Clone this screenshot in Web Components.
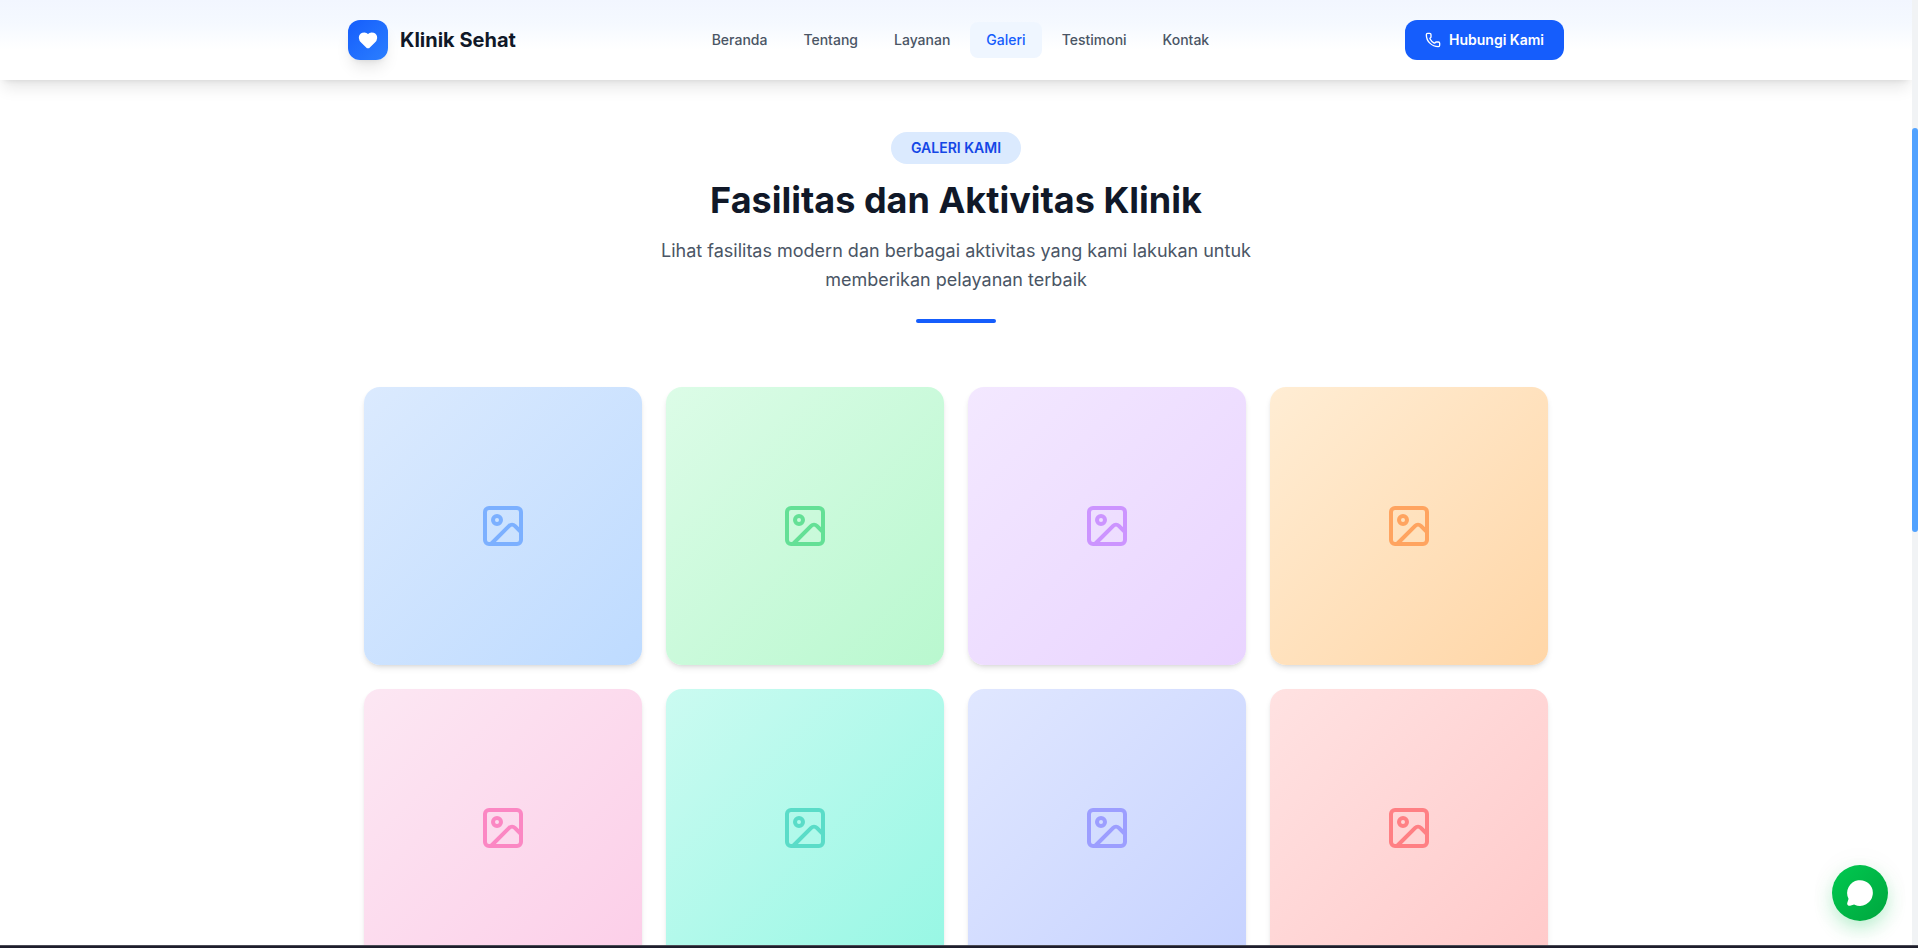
<!DOCTYPE html>
<html lang="id">
<head>
<meta charset="utf-8">
<meta name="viewport" content="width=device-width, initial-scale=1">
<title>Klinik Sehat</title>
<style>
  body {
    margin: 0;
    font-family: Inter, 'Liberation Sans', sans-serif;
    font-size: 14px;
    line-height: 20px;
    color: #101828;
  }
</style>
</head>
<body>
<klinik-app>
  <site-header slot="header">
    <nav-link href="#beranda">Beranda</nav-link>
    <nav-link href="#tentang">Tentang</nav-link>
    <nav-link href="#layanan">Layanan</nav-link>
    <nav-link href="#galeri" active>Galeri</nav-link>
    <nav-link href="#testimoni">Testimoni</nav-link>
    <nav-link href="#kontak">Kontak</nav-link>
  </site-header>
  <gallery-section>
    <span slot="badge">GALERI KAMI</span>
    <span slot="title">Fasilitas dan Aktivitas Klinik</span>
    <span slot="text">Lihat fasilitas modern dan berbagai aktivitas yang kami lakukan untuk memberikan pelayanan terbaik</span>
    <gallery-card color="blue"></gallery-card>
    <gallery-card color="green"></gallery-card>
    <gallery-card color="purple"></gallery-card>
    <gallery-card color="orange"></gallery-card>
    <gallery-card color="pink"></gallery-card>
    <gallery-card color="teal"></gallery-card>
    <gallery-card color="indigo"></gallery-card>
    <gallery-card color="red"></gallery-card>
  </gallery-section>
  <chat-button slot="chat"></chat-button>
</klinik-app>

<script>
const define = (name, html, setup) => {
  const template = document.createElement('template')
  template.innerHTML = html
  customElements.define(name, class extends HTMLElement {
    constructor () {
      super()
      this.attachShadow({ mode: 'open' })
        .appendChild(template.content.cloneNode(true))
    }

    connectedCallback () {
      if (setup) setup(this, this.shadowRoot)
    }
  })
}

define('klinik-app', `
  <style>
    :host {
      display: flex;
      flex-direction: column;
      height: 100vh;
      overflow: hidden;
      background: #fff;
    }
    #view {
      position: relative;
      flex: 1;
      min-height: 0;
      display: flex;
    }
    #page {
      flex: 1;
      min-width: 0;
      overflow: hidden;
    }
    #rail {
      width: 6px;
      background: #f1f3f5;
      display: flex;
      flex-direction: column;
    }
    #rail::before {
      content: '';
      flex: 128;
    }
    #rail::after {
      content: '';
      flex: 413;
    }
    #thumb {
      flex: 404;
      background: #51a2ff;
      border-radius: 3px;
    }
    #edge {
      height: 2px;
      border-top: 1px solid #4b4b55;
      background: #1e1e2c;
    }
    slot[name="chat"] {
      display: block;
      position: absolute;
      right: 30px;
      bottom: 24px;
    }
  </style>
  <div id="view">
    <div id="page">
      <slot name="header"></slot>
      <main><slot></slot></main>
    </div>
    <div id="rail"><div id="thumb"></div></div>
    <slot name="chat"></slot>
  </div>
  <div id="edge"></div>
`)

define('site-header', `
  <style>
    :host {
      display: block;
      position: relative;
      background: linear-gradient(#f2f6ff, #f5f9ff 30%, #fff 62%);
      box-shadow: 0 10px 15px -3px rgba(0, 0, 0, .1), 0 4px 6px -4px rgba(0, 0, 0, .1);
    }
    header {
      display: flex;
      align-items: center;
      justify-content: space-between;
      max-width: 1216px;
      height: 80px;
      margin: 0 auto;
    }
    #brand {
      display: flex;
      align-items: center;
      gap: 12px;
      color: #101828;
      font-size: 20px;
      font-weight: 700;
      line-height: 28px;
      text-decoration: none;
    }
    #logo {
      display: grid;
      place-items: center;
      width: 40px;
      height: 40px;
      border-radius: 12px;
      background: linear-gradient(135deg, #155dfc, #2b7fff);
      box-shadow: 0 10px 15px -3px rgba(0, 0, 0, .1), 0 4px 6px -4px rgba(0, 0, 0, .1);
    }
    nav {
      display: flex;
      gap: 4px;
    }
    button {
      display: flex;
      align-items: center;
      gap: 8px;
      padding: 10px 20px;
      border: none;
      border-radius: 12px;
      background: #155dfc;
      color: #fff;
      font: inherit;
      font-weight: 600;
      cursor: pointer;
    }
  </style>
  <header>
    <a id="brand" href="#beranda">
      <span id="logo">
        <svg width="20" height="20" viewBox="0 0 24 24" fill="#fff" stroke="#fff" stroke-width="2" stroke-linejoin="round">
          <path d="M2 9.500a5.500 5.500 0 0 1 9.591-3.676.56.56 0 0 0 .818 0A5.490 5.490 0 0 1 22 9.500c0 2.290-1.500 4-3 5.500l-5.492 5.313a2 2 0 0 1-3 .019L5 15c-1.500-1.500-3-3.200-3-5.500"/>
        </svg>
      </span>
      <span>Klinik Sehat</span>
    </a>
    <nav><slot></slot></nav>
    <button type="button">
      <svg width="16" height="16" viewBox="0 0 24 24" fill="none" stroke="#fff" stroke-width="2" stroke-linecap="round" stroke-linejoin="round">
        <path d="M13.832 16.568a1 1 0 0 0 1.213-.303l.355-.465A2 2 0 0 1 17 15h3a2 2 0 0 1 2 2v3a2 2 0 0 1-2 2A18 18 0 0 1 2 4a2 2 0 0 1 2-2h3a2 2 0 0 1 2 2v3a2 2 0 0 1-.8 1.600l-.468.351a1 1 0 0 0-.292 1.233 14 14 0 0 0 6.392 6.384"/>
      </svg>
      <span>Hubungi Kami</span>
    </button>
  </header>
`)

define('nav-link', `
  <style>
    :host {
      display: block;
    }
    a {
      display: block;
      padding: 8px 16px;
      border-radius: 8px;
      color: #4a5565;
      font-weight: 500;
      text-decoration: none;
    }
    :host([active]) a {
      background: #eff6ff;
      color: #155dfc;
    }
  </style>
  <a><slot></slot></a>
`, (host, root) => {
  root.querySelector('a').href = host.getAttribute('href')
})

define('gallery-section', `
  <style>
    :host {
      display: block;
      padding: 52px 32px 0;
    }
    #intro {
      display: flex;
      flex-direction: column;
      align-items: center;
      max-width: 672px;
      margin: 0 auto 64px;
      text-align: center;
    }
    #badge {
      padding: 6px 20px;
      border-radius: 16px;
      background: #dbeafe;
      color: #1447e6;
      font-weight: 600;
    }
    h2 {
      margin: 16px 0;
      font-size: 36px;
      font-weight: 700;
      line-height: 40px;
    }
    p {
      margin: 0 0 25px;
      color: #4a5565;
      font-size: 18px;
      line-height: 29px;
    }
    #bar {
      width: 80px;
      height: 4px;
      border-radius: 2px;
      background: #155dfc;
    }
    #grid {
      display: grid;
      grid-template-columns: repeat(4, 1fr);
      gap: 24px;
      max-width: 1184px;
      margin: 0 auto;
    }
  </style>
  <div id="intro">
    <div id="badge"><slot name="badge"></slot></div>
    <h2><slot name="title"></slot></h2>
    <p><slot name="text"></slot></p>
    <div id="bar"></div>
  </div>
  <div id="grid"><slot></slot></div>
`)

define('gallery-card', `
  <style>
    :host {
      display: grid;
      place-items: center;
      aspect-ratio: 1;
      border-radius: 16px;
      background: linear-gradient(135deg, var(--from), var(--to));
      box-shadow: 0 4px 6px -1px rgba(0, 0, 0, .1), 0 2px 4px -2px rgba(0, 0, 0, .1);
      color: var(--icon);
    }
    :host([color="blue"]) { --from: #dbeafe; --to: #bedbff; --icon: #7cb0ff; }
    :host([color="green"]) { --from: #dcfce7; --to: #b9f8cf; --icon: #64e096; }
    :host([color="purple"]) { --from: #f3e8ff; --to: #e9d4ff; --icon: #cc94ff; }
    :host([color="orange"]) { --from: #ffedd4; --to: #ffd6a7; --icon: #ffa460; }
    :host([color="pink"]) { --from: #fce7f3; --to: #fccee8; --icon: #fb87c3; }
    :host([color="teal"]) { --from: #cbfbf1; --to: #96f7e4; --icon: #5adcc8; }
    :host([color="indigo"]) { --from: #e0e7ff; --to: #c6d2ff; --icon: #9c9eff; }
    :host([color="red"]) { --from: #ffe2e2; --to: #ffc9c9; --icon: #ff8084; }
  </style>
  <svg width="48" height="48" viewBox="0 0 24 24" fill="none" stroke="currentColor" stroke-width="2" stroke-linecap="round" stroke-linejoin="round">
    <rect x="3" y="3" width="18" height="18" rx="2"/>
    <circle cx="9" cy="9" r="2"/>
    <path d="m21 15-3.086-3.086a2 2 0 0 0-2.828 0L6 21"/>
  </svg>
`)

define('chat-button', `
  <style>
    :host {
      display: block;
    }
    button {
      display: grid;
      place-items: center;
      width: 56px;
      height: 56px;
      padding: 0;
      border: none;
      border-radius: 50%;
      background: linear-gradient(135deg, #00c950, #00a63e);
      box-shadow: 0 0 40px rgba(0, 0, 0, .03), 0 8px 20px -2px rgba(0, 201, 80, .3);
      cursor: pointer;
    }
  </style>
  <button type="button" aria-label="Chat">
    <svg width="28" height="28" viewBox="0 0 24 24" fill="#fff" stroke="#fff" stroke-width="2" stroke-linecap="round" stroke-linejoin="round">
      <path d="M2.992 16.342a2 2 0 0 1 .094 1.167l-1.065 3.290a1 1 0 0 0 1.236 1.168l3.413-.998a2 2 0 0 1 1.099.092 10 10 0 1 0-4.777-4.719"/>
    </svg>
  </button>
`)
</script>
</body>
</html>
